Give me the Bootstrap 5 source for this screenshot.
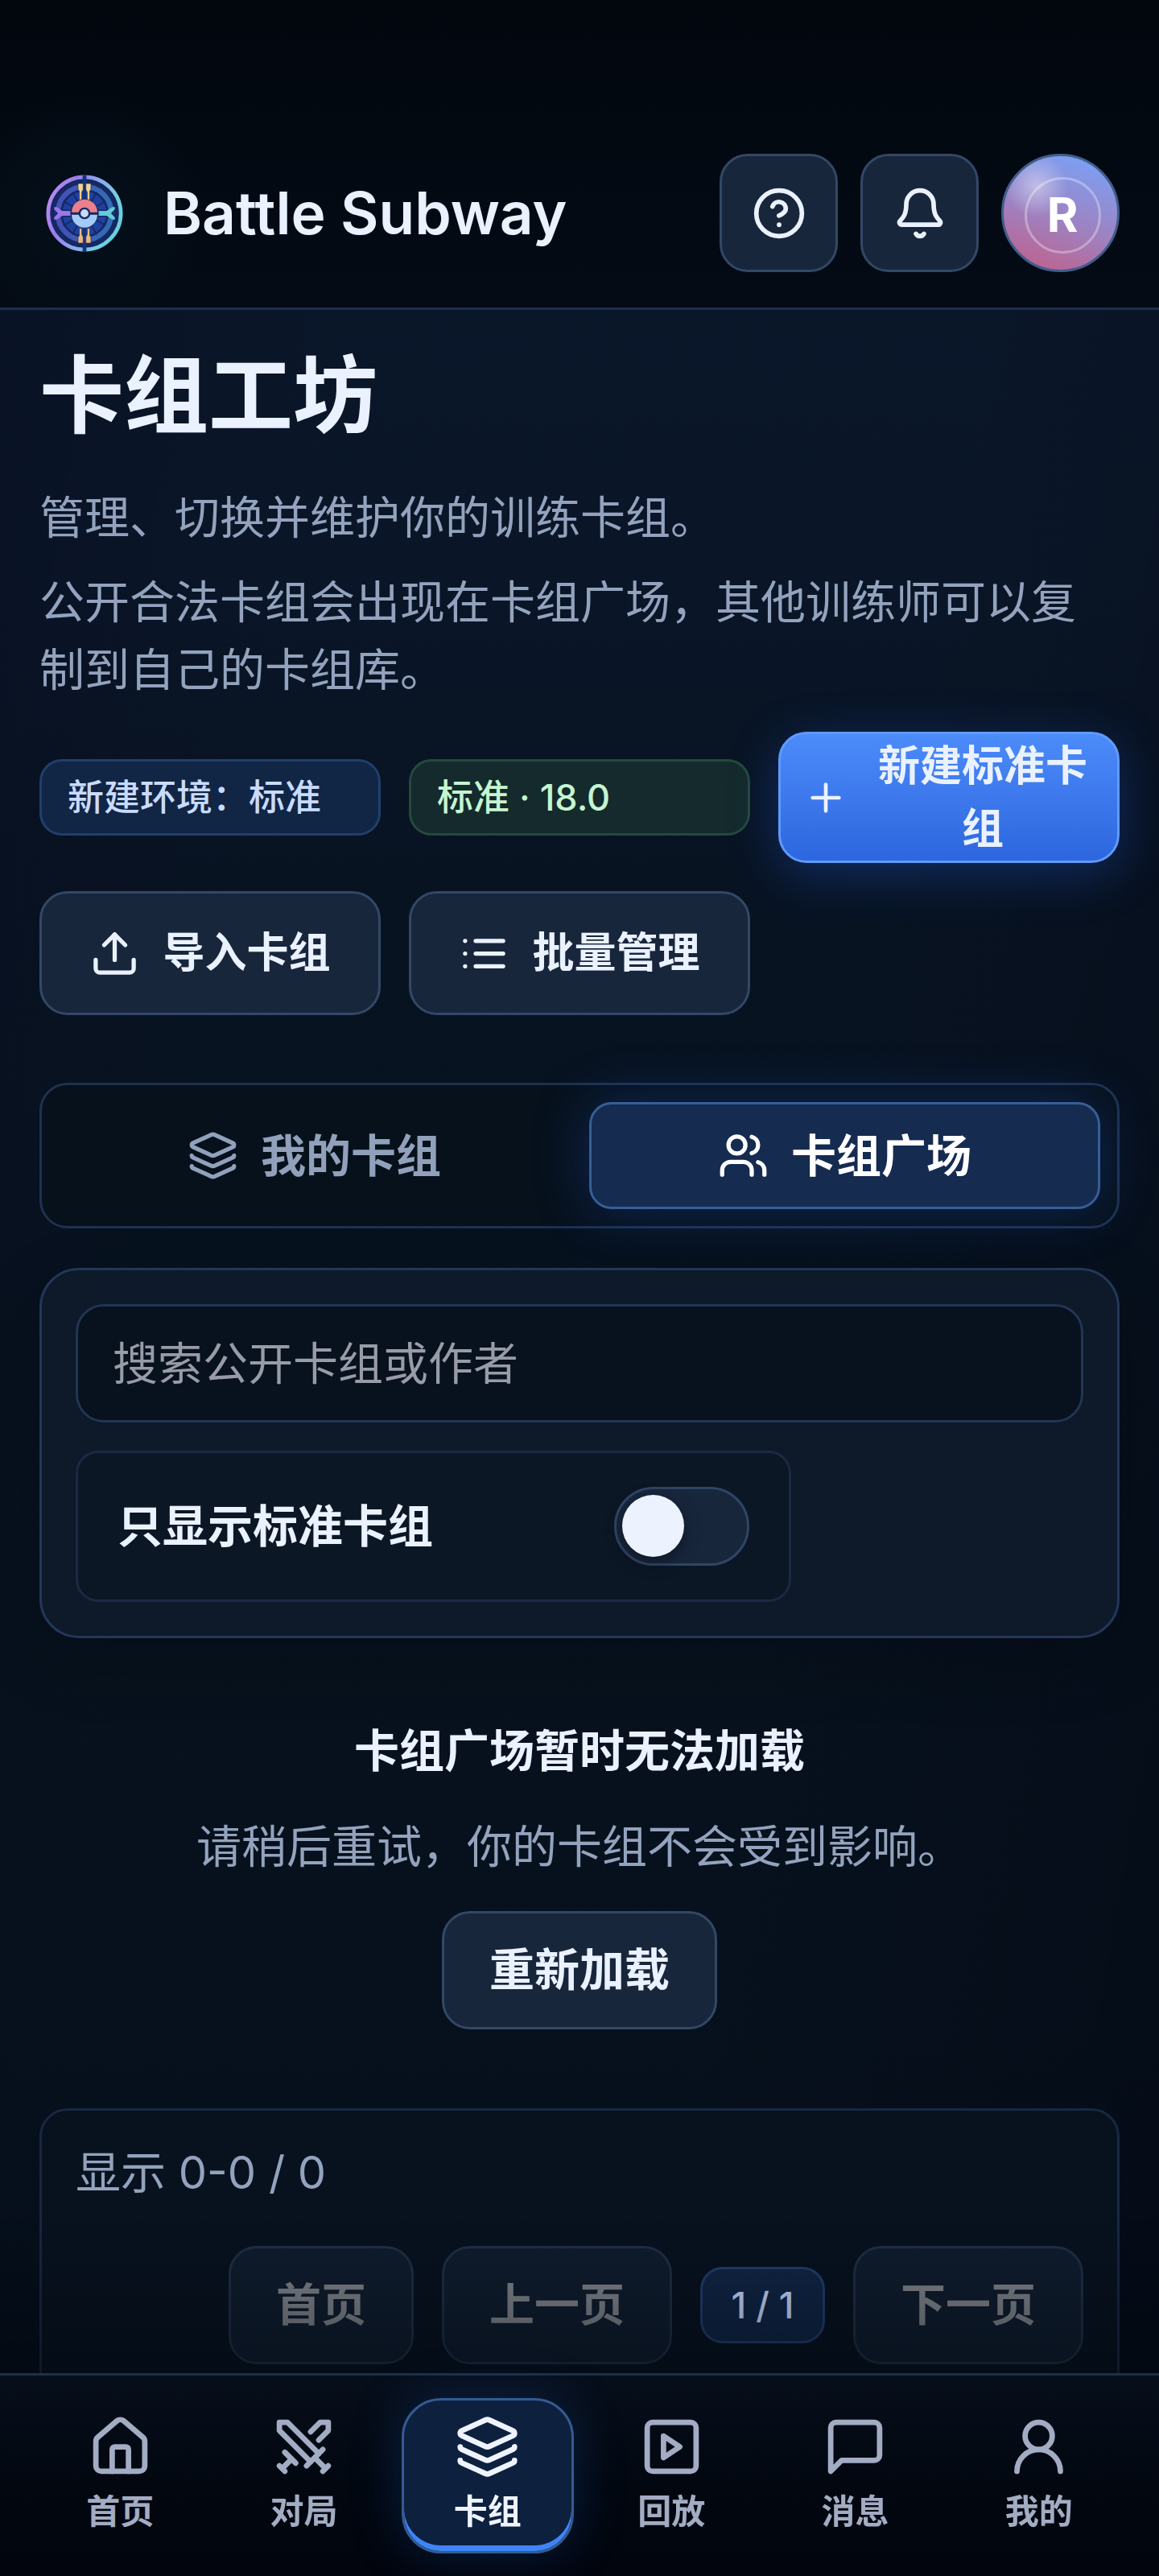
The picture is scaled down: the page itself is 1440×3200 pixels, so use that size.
<!DOCTYPE html>
<html lang="zh-CN" data-bs-theme="dark">
<head>
<meta charset="utf-8">
<meta name="viewport" content="width=device-width, initial-scale=1">
<title>Battle Subway · 卡组工坊</title>
<link rel="stylesheet" href="https://cdn.jsdelivr.net/npm/bootstrap@5.3.0/dist/css/bootstrap.min.css">
<style>
  :root {
    --ink: #eaf1ff;
    --muted: #93a3bd;
    --line: #1f3150;
    --line-strong: #324866;
    --gutter: 49px;
  }
  body {
    font-family: Inter, "Noto Sans CJK SC", sans-serif;
    font-size: 56px;
    line-height: 84px;
    color: var(--ink);
    background: linear-gradient(100deg, rgba(8, 12, 32, .4), transparent 25%, transparent 65%, rgba(4, 6, 18, .45)),
      linear-gradient(180deg, #0a172a 0, #0a1628 700px, #081322 1100px, #07121e 1700px, #06111d 2500px, #050c17 100%);
  }
  svg { fill: none; stroke: currentColor; stroke-width: 2; stroke-linecap: round; stroke-linejoin: round; flex-shrink: 0; }
  .ico { width: 63px; height: 63px; }
  .ico-sm { width: 56px; height: 56px; }
  .ico-md { width: 68px; height: 68px; }
  .ico-lg { width: 81px; height: 81px; }

  .topbar {
    padding: 191px var(--gutter) 44px;
    border-bottom: 3px solid #1c2f4a;
    background: radial-gradient(circle at 105px 265px, #05111b 0, transparent 150px), linear-gradient(180deg, #02070e, #040b15);
  }
  .brand { gap: 42px; font-size: 73px; font-weight: 600; color: var(--ink); text-decoration: none; }
  .brand svg { width: 112px; height: 96px; }
  .topbar-tools { gap: 28px; }
  .btn-soft, .btn-main {
    --bs-btn-color: var(--ink);
    --bs-btn-bg: #18263b;
    --bs-btn-border-color: var(--line-strong);
    --bs-btn-border-width: 3px;
    --bs-btn-border-radius: 35px;
    --bs-btn-disabled-color: #e6e6e6;
    --bs-btn-disabled-bg: #18263b;
    --bs-btn-disabled-border-color: var(--line-strong);
    --bs-btn-disabled-opacity: .55;
    --bs-btn-padding-x: 56px;
    --bs-btn-padding-y: 28px;
    --bs-btn-font-size: 56px;
    --bs-btn-font-weight: 600;
    --bs-btn-line-height: 85px;
    --bs-btn-hover-bg: #20314b;
    --bs-btn-hover-color: #fff;
  }
  .btn-main {
    --bs-btn-border-color: #5f9bfb;
    --bs-btn-hover-bg: #3b78ea;
    background: linear-gradient(180deg, #4c8bfa, #2d66de);
    box-shadow: 0 14px 63px rgba(37, 99, 235, .32);
  }
  .btn-square { width: 147px; height: 147px; --bs-btn-padding-x: 0; --bs-btn-padding-y: 0; }
  .avatar {
    width: 147px; height: 147px; padding: 5px 0 0 5px;
    border: 3px solid #405e8c; border-radius: 50%;
    background: radial-gradient(circle at 29% 26%, rgba(255, 255, 255, .42), transparent 27%),
      linear-gradient(200deg, #7d9ff2 10%, #9c84c4 52%, #bd6390 92%);
  }
  .avatar-ring {
    width: 95px; height: 95px; border: 3px solid rgba(255, 255, 255, .32); border-radius: 50%;
    font-size: 59px; font-weight: 700; color: #fff;
  }

  .page { padding: 43px var(--gutter) 216px; }
  .page-title { font-size: 105px; line-height: 126px; font-weight: 700; color: var(--ink); margin-bottom: 47px; }
  .intro { color: var(--muted); margin-bottom: 35px; }
  .intro p { margin-bottom: 21px; }
  .intro p:last-child { margin-bottom: 0; }

  .actions { display: grid; grid-template-columns: repeat(3, 1fr); gap: 35px; align-items: center; margin-bottom: 84px; }
  .actions .btn {
    --bs-btn-padding-x: 28px; --bs-btn-padding-y: 0px;
    --bs-btn-font-size: 52px; --bs-btn-line-height: 78px;
    gap: 28px; min-height: 154px;
  }
  .actions .btn-main { min-height: 163px; }
  .chip {
    padding: 13px 32px; border: 3px solid #213f6d; border-radius: 28px;
    background: #112545; color: #c9dbff; font-size: 45px; line-height: 63px; font-weight: 500;
  }
  .chip-ok { background: #142a2c; border-color: #25493c; color: #c5f5d0; }

  .switcher { border: 3px solid var(--line); border-radius: 35px; padding: 21px; gap: 24px; margin-bottom: 49px; background: #07111c; }
  .switcher .tab {
    gap: 28px; height: 133px; border: 3px solid transparent; border-radius: 28px;
    background: none; color: #91a1bb; font-weight: 600; padding: 0;
  }
  .switcher .tab.active { color: #fff; background: #152b50; border-color: #375e96; box-shadow: 0 0 70px rgba(37, 99, 235, .28); }

  .filters { border: 3px solid #22375a; border-radius: 49px; background: #0e1929; padding: 42px; gap: 35px; margin-bottom: 98px; box-shadow: 0 28px 84px rgba(0, 0, 0, .2); }
  .filters .form-control {
    height: 147px; padding: 0 43px; border: 3px solid #213554; border-radius: 35px;
    background: #08111e; font-size: 56px; line-height: 84px; color: var(--ink);
  }
  .filters .form-control::placeholder { color: #979ca7; opacity: 1; }
  .only-standard {
    width: 71%; height: 188px; padding: 0 49px; border: 3px solid #1a2a43; border-radius: 28px;
    background: #0c1725; font-weight: 600;
  }
  .only-standard .form-check-input {
    width: 168px; height: 98px; margin: 0; border: 3px solid #304565; border-radius: 49px;
    background: #18263c; position: relative;
  }
  .only-standard .form-check-input::before {
    content: ""; position: absolute; left: 7px; top: 7px; width: 77px; height: 77px;
    border-radius: 50%; background: #edf2ff; box-shadow: 0 7px 21px rgba(0, 0, 0, .4);
  }
  .only-standard .form-check-input:checked::before { left: 77px; }

  .notice { margin-bottom: 98px; }
  .notice h2 { font-size: 56px; line-height: 84px; font-weight: 600; color: var(--ink); margin-bottom: 35px; }
  .notice p { color: var(--muted); margin-bottom: 38px; }

  .pager { border: 3px solid #192841; border-radius: 35px; padding: 35px 42px 42px; background: #08121f; }
  .pager-count { color: var(--muted); margin-bottom: 49px; }
  .pager-row { gap: 35px; }
  .pager-row .chip { min-width: 155px; text-align: center; }

  .tabbar {
    padding: 28px 42px; gap: 14px; border-top: 3px solid #1c2f4b;
    background: linear-gradient(180deg, #070f1b, #020710 55%, #02050d);
  }
  /* content fades into the bar */
  .tabbar::before {
    content: ""; position: absolute; left: 0; right: 0; bottom: 100%; height: 190px; margin-bottom: 3px;
    background: linear-gradient(180deg, transparent, rgba(1, 6, 13, .45)); pointer-events: none;
  }
  .tabbar a {
    flex: 1 1 0; height: 193px; padding-top: 17px; border: 3px solid transparent; border-radius: 49px;
    color: #a2acc3; text-decoration: none; font-size: 42px; line-height: 63px; font-weight: 600; gap: 8px;
  }
  .tabbar a.active {
    color: #eef3ff; background: #0d203e; border-color: #345b91;
    box-shadow: inset 0 -7px 0 #3f84f7, 0 0 63px rgba(30, 90, 190, .28);
  }
</style>
</head>
<body>
<header class="topbar d-flex align-items-center justify-content-between">
  <a class="brand d-flex align-items-center" href="#">
    <svg viewBox="-24 0 330 282" aria-hidden="true">
      <defs>
        <linearGradient id="rim" x1="0" y1="0.3" x2="1" y2="0.7">
          <stop offset="0" stop-color="#b78af0"/><stop offset=".25" stop-color="#9a7cec"/><stop offset=".5" stop-color="#8ea6ec"/><stop offset=".8" stop-color="#76cfe3"/><stop offset="1" stop-color="#62cfdc"/>
        </linearGradient>
        <linearGradient id="band" x1="0" y1="0" x2="1" y2="0"><stop offset="0" stop-color="#4450b8"/><stop offset="1" stop-color="#326db4"/></linearGradient>
        <linearGradient id="gold" x1="0" y1="0" x2="0" y2="1"><stop offset="0" stop-color="#f6d88f"/><stop offset="1" stop-color="#f0b673"/></linearGradient>
      </defs>
      <circle cx="141" cy="141" r="139" fill="#152862" stroke="none"/>
      <circle cx="141" cy="141" r="133" stroke="url(#rim)" stroke-width="14"/>
      <circle cx="141" cy="141" r="98" stroke="url(#band)" stroke-width="19"/>
      <circle cx="141" cy="141" r="81" fill="#1f409f" stroke="none"/>
      <path d="M141 141 65 97M141 141 97 65M141 141 217 97M141 141 185 65M141 141 65 185M141 141 97 217M141 141 217 185M141 141 185 217" stroke="#152862" stroke-width="5"/>
      <path d="M141 0v282" stroke="#173377" stroke-width="14" stroke-linecap="butt"/>
      <path d="M34 141h214" stroke="#152862" stroke-width="26" stroke-linecap="butt"/>
      <path d="M118 32h18v22l-5 10v28h-9V60l-4-6zM164 32h-18v22l5 10v28h9V60l4-6zM118 250h18v-22l-5-10v-22h-9v26l-4 6zM164 250h-18v-22l5-10v-22h9v26l4 6z" fill="url(#gold)" stroke="#173377" stroke-width="2"/>
      <path d="M30 118h10l20 14h34v18H60l-20 14H30v-8l14-15-14-15z" fill="#9d76e9" stroke="none"/>
      <path d="M252 118h-10l-20 14h-34v18h34l20 14h10v-8l-14-15 14-15z" fill="#61cbd9" stroke="none"/>
      <circle cx="141" cy="141" r="52" fill="#152862" stroke="none"/>
      <path d="M94 137a47 47 0 0 1 94 0z" fill="#ec7f8c" stroke="none"/>
      <path d="M94 146a47 47 0 0 0 94 0z" fill="#a4cbf5" stroke="none"/>
      <circle cx="141" cy="141" r="18" fill="#c9daf8" stroke="#152862" stroke-width="7"/>
    </svg>
    <span>Battle Subway</span>
  </a>
  <div class="topbar-tools d-flex">
    <button type="button" class="btn btn-soft btn-square d-flex align-items-center justify-content-center" aria-label="帮助">
      <svg class="ico-md" viewBox="0 0 24 24"><circle cx="12" cy="12" r="10"/><path d="M9.09 9a3 3 0 0 1 5.83 1c0 2-3 3-3 3"/><path d="M12 17h.01"/></svg>
    </button>
    <button type="button" class="btn btn-soft btn-square d-flex align-items-center justify-content-center" aria-label="通知">
      <svg class="ico-md" viewBox="0 0 24 24"><path d="M10.268 21a2 2 0 0 0 3.464 0"/><path d="M3.262 15.326A1 1 0 0 0 4 17h16a1 1 0 0 0 .74-1.673C19.41 13.956 18 12.499 18 8A6 6 0 0 0 6 8c0 4.499-1.411 5.956-2.738 7.326"/></svg>
    </button>
    <button type="button" class="avatar d-flex align-items-center justify-content-center" aria-label="账户"><span class="avatar-ring d-flex align-items-center justify-content-center">R</span></button>
  </div>
</header>

<main class="page">
  <h1 class="page-title">卡组工坊</h1>
  <div class="intro">
    <p>管理、切换并维护你的训练卡组。</p>
    <p>公开合法卡组会出现在卡组广场，其他训练师可以复制到自己的卡组库。</p>
  </div>

  <div class="actions">
    <span class="chip">新建环境：标准</span>
    <span class="chip chip-ok">标准 · 18.0</span>
    <button type="button" class="btn btn-main d-flex align-items-center justify-content-center">
      <svg class="ico-sm" viewBox="0 0 24 24"><path d="M5 12h14M12 5v14"/></svg>
      <span>新建标准卡组</span>
    </button>
    <button type="button" class="btn btn-soft d-flex align-items-center justify-content-center">
      <svg class="ico" viewBox="0 0 24 24"><path d="M12 3v12"/><path d="m17 8-5-5-5 5"/><path d="M21 15v4a2 2 0 0 1-2 2H5a2 2 0 0 1-2-2v-4"/></svg>
      <span>导入卡组</span>
    </button>
    <button type="button" class="btn btn-soft d-flex align-items-center justify-content-center">
      <svg class="ico" viewBox="0 0 24 24"><path d="M3 6h.01M3 12h.01M3 18h.01M8 6h13M8 12h13M8 18h13"/></svg>
      <span>批量管理</span>
    </button>
  </div>

  <div class="switcher d-flex" role="tablist">
    <button type="button" role="tab" aria-selected="false" class="tab flex-fill w-50 d-flex align-items-center justify-content-center">
      <svg class="ico" viewBox="0 0 24 24"><path d="M12.83 2.18a2 2 0 0 0-1.66 0L2.6 6.08a1 1 0 0 0 0 1.83l8.58 3.91a2 2 0 0 0 1.66 0l8.58-3.9a1 1 0 0 0 0-1.83z"/><path d="M2 12a1 1 0 0 0 .58.91l8.6 3.91a2 2 0 0 0 1.65 0l8.58-3.9A1 1 0 0 0 22 12"/><path d="M2 17a1 1 0 0 0 .58.91l8.6 3.91a2 2 0 0 0 1.65 0l8.58-3.9A1 1 0 0 0 22 17"/></svg>
      <span>我的卡组</span>
    </button>
    <button type="button" role="tab" aria-selected="true" class="tab active flex-fill w-50 d-flex align-items-center justify-content-center">
      <svg class="ico" viewBox="0 0 24 24"><path d="M16 21v-2a4 4 0 0 0-4-4H6a4 4 0 0 0-4 4v2"/><circle cx="9" cy="7" r="4"/><path d="M22 21v-2a4 4 0 0 0-3-3.87"/><path d="M16 3.13a4 4 0 0 1 0 7.75"/></svg>
      <span>卡组广场</span>
    </button>
  </div>

  <section class="filters d-flex flex-column">
    <input type="search" class="form-control" placeholder="搜索公开卡组或作者" aria-label="搜索公开卡组或作者">
    <div class="only-standard d-flex align-items-center justify-content-between">
      <label for="onlyStandard">只显示标准卡组</label>
      <input class="form-check-input" type="checkbox" role="switch" id="onlyStandard">
    </div>
  </section>

  <section class="notice d-flex flex-column align-items-center text-center">
    <h2>卡组广场暂时无法加载</h2>
    <p>请稍后重试，你的卡组不会受到影响。</p>
    <button type="button" class="btn btn-soft">重新加载</button>
  </section>

  <section class="pager">
    <div class="pager-count">显示 0-0 / 0</div>
    <div class="pager-row d-flex align-items-center justify-content-end">
      <button type="button" class="btn btn-soft" disabled>首页</button>
      <button type="button" class="btn btn-soft" disabled>上一页</button>
      <span class="chip">1 / 1</span>
      <button type="button" class="btn btn-soft" disabled>下一页</button>
    </div>
  </section>
</main>

<nav class="tabbar fixed-bottom d-flex" aria-label="主导航">
  <a href="#" class="d-flex flex-column align-items-center">
    <svg class="ico-lg" viewBox="0 0 24 24"><path d="M15 21v-8a1 1 0 0 0-1-1h-4a1 1 0 0 0-1 1v8"/><path d="M3 10a2 2 0 0 1 .709-1.528l7-5.999a2 2 0 0 1 2.582 0l7 5.999A2 2 0 0 1 21 10v9a2 2 0 0 1-2 2H5a2 2 0 0 1-2-2z"/></svg>
    <span>首页</span>
  </a>
  <a href="#" class="d-flex flex-column align-items-center">
    <svg class="ico-lg" viewBox="0 0 24 24"><path d="M14.5 17.5 3 6V3h3l11.5 11.5"/><path d="m13 19 6-6M16 16l4 4M19 21l2-2"/><path d="M14.5 6.5 18 3h3v3l-3.5 3.5"/><path d="m5 14 4 4M7 17l-3 3M3 19l2 2"/></svg>
    <span>对局</span>
  </a>
  <a href="#" class="active d-flex flex-column align-items-center" aria-current="page">
    <svg class="ico-lg" viewBox="0 0 24 24"><path d="M12.83 2.18a2 2 0 0 0-1.66 0L2.6 6.08a1 1 0 0 0 0 1.83l8.58 3.91a2 2 0 0 0 1.66 0l8.58-3.9a1 1 0 0 0 0-1.83z"/><path d="M2 12a1 1 0 0 0 .58.91l8.6 3.91a2 2 0 0 0 1.65 0l8.58-3.9A1 1 0 0 0 22 12"/><path d="M2 17a1 1 0 0 0 .58.91l8.6 3.91a2 2 0 0 0 1.65 0l8.58-3.9A1 1 0 0 0 22 17"/></svg>
    <span>卡组</span>
  </a>
  <a href="#" class="d-flex flex-column align-items-center">
    <svg class="ico-lg" viewBox="0 0 24 24"><rect x="3" y="3" width="18" height="18" rx="2"/><path d="m9 8 6 4-6 4z"/></svg>
    <span>回放</span>
  </a>
  <a href="#" class="d-flex flex-column align-items-center">
    <svg class="ico-lg" viewBox="0 0 24 24"><path d="M21 15a2 2 0 0 1-2 2H7l-4 4V5a2 2 0 0 1 2-2h14a2 2 0 0 1 2 2z"/></svg>
    <span>消息</span>
  </a>
  <a href="#" class="d-flex flex-column align-items-center">
    <svg class="ico-lg" viewBox="0 0 24 24"><circle cx="12" cy="8" r="5"/><path d="M20 21a8 8 0 0 0-16 0"/></svg>
    <span>我的</span>
  </a>
</nav>
<script src="https://cdn.jsdelivr.net/npm/bootstrap@5.3.0/dist/js/bootstrap.bundle.min.js"></script>
</body>
</html>
